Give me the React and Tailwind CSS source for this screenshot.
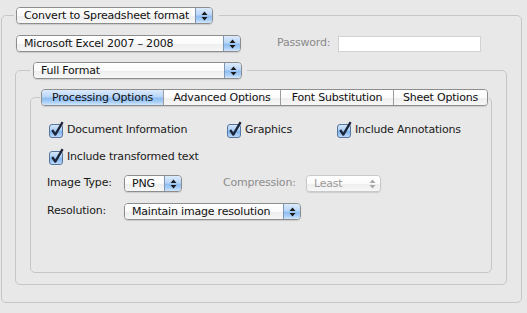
import React from 'react';
import clsx from 'clsx';

const Arrows = ({ color = '#1b1b1b' }) => (
    <svg width="7" height="10" viewBox="0 0 7 10">
        <path d="M3.5 0.5 L6.5 4 L0.5 4 Z M3.5 9.5 L6.5 6 L0.5 6 Z" fill={color} />
    </svg>
);

const Popup = ({ width, label, disabled = false }) => (
    <div
        className={clsx(
            'flex h-[17px] shrink-0 overflow-hidden rounded-[4px] border shadow-[0_1px_1px_rgba(0,0,0,0.12)]',
            width,
            disabled ? 'border-[#c9c9c9] text-[#9b9b9b]' : 'border-[#8d8d8d] text-[#111]'
        )}
    >
        <div className="flex flex-1 items-center pl-[7px] leading-[15px] whitespace-nowrap bg-[linear-gradient(to_bottom,#ffffff_0%,#fbfbfb_50%,#eeeeee_55%,#f7f7f7_100%)]">
            {label}
        </div>
        {disabled ? (
            <div className="flex w-[16px] items-center justify-center bg-[linear-gradient(to_bottom,#ffffff_0%,#fbfbfb_50%,#eeeeee_55%,#f7f7f7_100%)]">
                <Arrows color="#a8a8a8" />
            </div>
        ) : (
            <div className="flex w-[17px] items-center justify-center border-l border-[#7f95b4] bg-[linear-gradient(to_bottom,#dcebfc_0%,#b9d6f8_45%,#8fbef2_55%,#a8cef7_80%,#d4e7fb_100%)]">
                <Arrows />
            </div>
        )}
    </div>
);

const Checkbox = ({ label }) => (
    <div className="flex items-center gap-[2px]">
        <svg width="16" height="17" viewBox="0 0 16 17" className="shrink-0">
            <defs>
                <linearGradient id="cbfill" x1="0" y1="0" x2="0" y2="1">
                    <stop offset="0" stopColor="#d8e9fc" />
                    <stop offset="0.45" stopColor="#a9cdf5" />
                    <stop offset="0.55" stopColor="#7fb3ee" />
                    <stop offset="1" stopColor="#c3dcf9" />
                </linearGradient>
            </defs>
            <rect x="0.5" y="3.5" width="13" height="13" rx="2.5" fill="url(#cbfill)" stroke="#56769f" />
            <path d="M3.2 9 L6.3 13.6 L13.6 1.2" fill="none" stroke="#1d2436" strokeWidth="2.3" strokeLinejoin="round" />
        </svg>
        <span className="leading-[15px] text-[#1a1a1a] whitespace-nowrap">{label}</span>
    </div>
);

const tabs = [
    { name: 'Processing Options', w: 'w-[121px]', active: true },
    { name: 'Advanced Options', w: 'w-[117px]' },
    { name: 'Font Substitution', w: 'w-[113px]' },
    { name: 'Sheet Options', w: 'w-[94px]' },
];

const Tabs = () => (
    <div className="flex h-[17px] overflow-hidden rounded-[4px] border border-[#8d8d8d] shadow-[0_1px_1px_rgba(0,0,0,0.12)]">
        {tabs.map((t, i) => (
            <div
                key={t.name}
                className={clsx(
                    'flex items-center justify-center leading-[15px] whitespace-nowrap text-[#111]',
                    t.w,
                    i > 0 && 'border-l border-[#9d9d9d]',
                    t.active
                        ? 'bg-[linear-gradient(to_bottom,#dcebfc_0%,#b9d6f8_45%,#8fbef2_55%,#a8cef7_80%,#d4e7fb_100%)]'
                        : 'bg-[linear-gradient(to_bottom,#ffffff_0%,#fbfbfb_50%,#eeeeee_55%,#f7f7f7_100%)]'
                )}
            >
                {t.name}
            </div>
        ))}
    </div>
);

export default function App() {
    return (
        <div className="w-[527px] h-[313px] overflow-hidden bg-[#e8e8e8] pl-[1px] pt-[7px] font-['DejaVu_Sans',sans-serif] text-[11px] tracking-[-0.2px]">
            <fieldset className="w-[521px] h-[296px] rounded-[5px] border border-[#c6c6c6]">
                <legend className="ml-[12px] pl-[2px] pr-[6px]">
                    <Popup width="w-[197px]" label="Convert to Spreadsheet format" />
                </legend>

                <div className="mt-[11px] ml-[14px] flex items-center">
                    <Popup width="w-[225px]" label="Microsoft Excel 2007 – 2008" />
                    <span className="ml-[36px] text-[#8a8a8a]">Password:</span>
                    <div className="ml-[8px] h-[16px] w-[143px] border border-[#d2d2d2] bg-white" />
                </div>

                <fieldset className="ml-[13px] mt-[10px] w-[492px] h-[223px] rounded-[5px] border border-[#c6c6c6]">
                    <legend className="ml-[14px] pl-[3px] pr-[5px]">
                        <Popup width="w-[209px]" label="Full Format" />
                    </legend>

                    <fieldset className="ml-[14px] mt-[10px] w-[462px] h-[184px] rounded-[5px] border border-[#c6c6c6]">
                        <legend className="ml-[9px] px-[1px]">
                            <Tabs />
                        </legend>

                        <div className="mt-[15px] pl-[18px] flex items-center">
                            <div className="w-[178px]"><Checkbox label="Document Information" /></div>
                            <div className="w-[110px]"><Checkbox label="Graphics" /></div>
                            <Checkbox label="Include Annotations" />
                        </div>

                        <div className="mt-[10px] pl-[18px] flex items-center">
                            <Checkbox label="Include transformed text" />
                        </div>

                        <div className="mt-[10px] pl-[16px] flex items-center text-[#1a1a1a]">
                            <span className="w-[77px]">Image Type:</span>
                            <Popup width="w-[58px]" label="PNG" />
                            <span className="ml-[41px] w-[83px] text-[#8d8d8d]">Compression:</span>
                            <Popup width="w-[75px]" label="Least" disabled />
                        </div>

                        <div className="mt-[11px] pl-[16px] flex items-center text-[#1a1a1a]">
                            <span className="w-[77px]">Resolution:</span>
                            <Popup width="w-[177px]" label="Maintain image resolution" />
                        </div>
                    </fieldset>
                </fieldset>
            </fieldset>
        </div>
    );
}
